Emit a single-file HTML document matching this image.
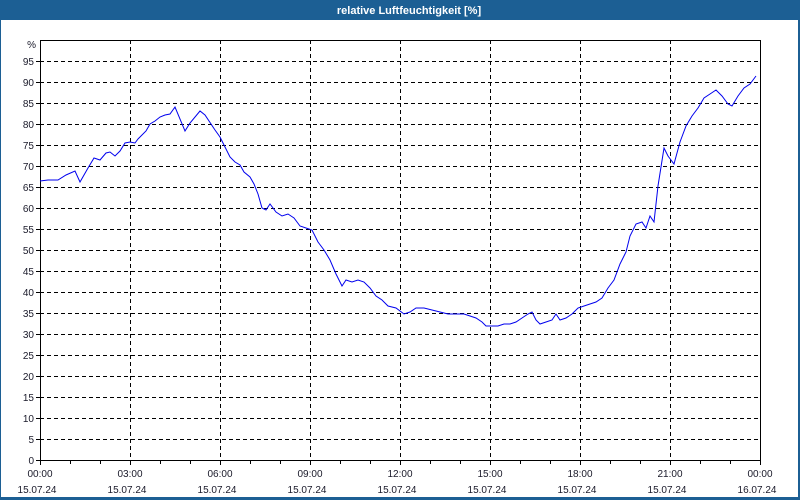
<!DOCTYPE html>
<html><head><meta charset="utf-8"><style>
html,body{margin:0;padding:0;background:#fff;}
svg{display:block;font-family:"Liberation Sans",sans-serif;}
</style></head><body>
<svg width="800" height="500" viewBox="0 0 800 500" xmlns="http://www.w3.org/2000/svg">
<rect x="0" y="0" width="800" height="500" fill="#1c5f94"/>
<rect x="1" y="20" width="797" height="477" fill="#fff"/>
<text x="409" y="14" fill="#fff" font-size="11" font-weight="bold" text-anchor="middle">relative Luftfeuchtigkeit [%]</text>
<g stroke="#000" stroke-width="1" stroke-dasharray="4,3" shape-rendering="crispEdges">
<path d="M40 61.5H760M40 82.5H760M40 103.5H760M40 124.5H760M40 145.5H760M40 166.5H760M40 187.5H760M40 208.5H760M40 229.5H760M40 250.5H760M40 271.5H760M40 292.5H760M40 313.5H760M40 334.5H760M40 355.5H760M40 376.5H760M40 397.5H760M40 418.5H760M40 439.5H760"/>
<path d="M130.5 40V460M220.5 40V460M310.5 40V460M400.5 40V460M490.5 40V460M580.5 40V460M670.5 40V460"/>
</g>
<g stroke="#000" stroke-width="1" fill="none" shape-rendering="crispEdges">
<rect x="40.5" y="40.5" width="720" height="420"/>
<path d="M70.5 460V464M100.5 460V464M130.5 460V465M160.5 460V464M190.5 460V464M220.5 460V465M250.5 460V464M280.5 460V464M310.5 460V465M340.5 460V464M370.5 460V464M400.5 460V465M430.5 460V464M460.5 460V464M490.5 460V465M520.5 460V464M550.5 460V464M580.5 460V465M610.5 460V464M640.5 460V464M670.5 460V465M700.5 460V464M730.5 460V464M760.5 460V465M40.5 460V465"/>
<path d="M36 61.5H40M36 82.5H40M36 103.5H40M36 124.5H40M36 145.5H40M36 166.5H40M36 187.5H40M36 208.5H40M36 229.5H40M36 250.5H40M36 271.5H40M36 292.5H40M36 313.5H40M36 334.5H40M36 355.5H40M36 376.5H40M36 397.5H40M36 418.5H40M36 439.5H40M36 460.5H40"/>
</g>
<g fill="#1a1a2a" font-size="10" text-anchor="end">
<text x="36" y="48">%</text>
<text x="34" y="65">95</text><text x="34" y="86">90</text><text x="34" y="107">85</text><text x="34" y="128">80</text><text x="34" y="149">75</text><text x="34" y="170">70</text><text x="34" y="191">65</text><text x="34" y="212">60</text><text x="34" y="233">55</text><text x="34" y="254">50</text><text x="34" y="275">45</text><text x="34" y="296">40</text><text x="34" y="317">35</text><text x="34" y="338">30</text><text x="34" y="359">25</text><text x="34" y="380">20</text><text x="34" y="401">15</text><text x="34" y="422">10</text><text x="34" y="443">5</text><text x="34" y="464">0</text>
</g>
<g fill="#1a1a2a" font-size="10" text-anchor="middle">
<text x="40" y="477">00:00</text><text x="130" y="477">03:00</text><text x="220" y="477">06:00</text><text x="310" y="477">09:00</text><text x="400" y="477">12:00</text><text x="490" y="477">15:00</text><text x="580" y="477">18:00</text><text x="670" y="477">21:00</text><text x="760" y="477">00:00</text>
<text x="37" y="493">15.07.24</text><text x="127" y="493">15.07.24</text><text x="217" y="493">15.07.24</text><text x="307" y="493">15.07.24</text><text x="397" y="493">15.07.24</text><text x="487" y="493">15.07.24</text><text x="577" y="493">15.07.24</text><text x="667" y="493">15.07.24</text><text x="757" y="493">16.07.24</text>
</g>
<polyline fill="none" stroke="#0000ee" stroke-width="1" points="40,181 48,180 58,180 66,175 75,171 80,182 88,168 94,158 100,160 106,153 110,152 115,156 120,151 125,143 130,142 135,143 138,139 146,131 150,124 155,121 160,117 165,115 170,114 175,107 185,131 190,123 200,111 205,115 215,130 220,137 225,147 230,157 235,162 240,165 244,172 250,177 254,184 258,194 262,208 266,210 270,204 276,212 282,216 288,214 294,218 300,226 306,228 312,230 318,242 324,250 330,260 336,274 342,286 346,280 352,282 358,280 364,282 370,288 376,296 382,300 388,306 396,308 404,314 410,312 416,308 424,308 432,310 440,312 448,314 456,314 464,314 470,316 476,318 482,322 486,326 492,326 498,326 504,324 510,324 516,322 522,318 528,314 532,312 536,320 540,324 546,322 552,320 556,314 560,320 566,318 572,314 578,308 584,306 590,304 596,302 602,298 608,288 614,280 620,264 626,252 630,236 636,224 642,222 646,228 650,216 654,222 658,186 664,148 668,156 674,164 680,142 686,126 692,116 698,108 704,98 710,94 716,90 722,96 728,104 732,106 738,96 744,88 750,84 756,76"/>
</svg>
</body></html>
